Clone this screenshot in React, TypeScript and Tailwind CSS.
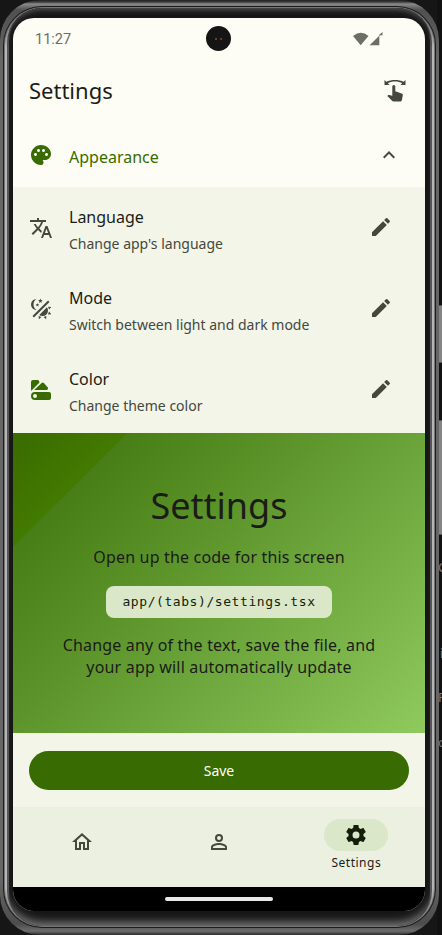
import React from "react";
import { MdPalette, MdTranslate, MdEdit } from "react-icons/md";

const P = {
  swipe:
    "M9.3 8.500A1.500 1.500 0 0 1 12.300 8.500V13.470L13.210 13.600L18.500 15.400C19.500 15.800 20 16.300 19.800 17.140L18.900 22C18.700 22.800 18.200 23.500 17.400 23.500H10.500C10 23.500 9.700 23.300 9.300 23L4.300 18L5 17.200C5.300 16.900 5.700 16.900 6 17L9.300 17.700Z M1.500 2V7H6.700L4.800 5.200C6.700 4.100 9.100 3.500 12 3.500S17.300 4.100 19.200 5.200L17.300 7H22.500V2L20.700 3.800C18.400 2.600 15.300 2 12 2S5.600 2.600 3.300 3.800L1.500 2Z",
  mode:
    "M7.5,2C5.71,3.15 4.5,5.18 4.5,7.5C4.5,9.82 5.71,11.85 7.53,13C4.46,13 2,10.54 2,7.5A5.5,5.5 0 0,1 7.5,2M19.07,3.5L20.5,4.93L4.93,20.5L3.5,19.07L19.07,3.5M12.89,5.93L11.41,5L9.97,6L10.39,4.3L9,3.24L10.75,3.12L11.33,1.47L12,3.1L13.73,3.13L12.38,4.26L12.89,5.93M9.59,9.54L8.43,8.81L7.31,9.59L7.65,8.27L6.56,7.44L7.92,7.35L8.37,6.06L8.88,7.33L10.24,7.36L9.19,8.23L9.59,9.54M19,13.5A5.5,5.5 0 0,1 13.5,19C12.28,19 11.15,18.6 10.24,17.93L17.93,10.24C18.6,11.15 19,12.28 19,13.5M14.6,20.08L17.37,18.93L17.13,22.28L14.6,20.08M18.93,17.38L20.08,14.61L22.28,17.15L18.93,17.38M20.08,12.42L18.94,9.64L22.28,9.88L20.08,12.42M9.63,18.93L12.4,20.08L9.87,22.27L9.63,18.93Z",
  home: "M12 5.69L17 10.19V18H15V12H9V18H7V10.19L12 5.69M12 3L2 12H5V20H11V14H13V20H19V12H22L12 3Z",
  account:
    "M12,4A4,4 0 0,1 16,8A4,4 0 0,1 12,12A4,4 0 0,1 8,8A4,4 0 0,1 12,4M12,6A2,2 0 0,0 10,8A2,2 0 0,0 12,10A2,2 0 0,0 14,8A2,2 0 0,0 12,6M12,13C14.67,13 20,14.33 20,17V20H4V17C4,14.33 9.33,13 12,13M12,14.9C9.03,14.9 5.9,16.36 5.9,17V18.1H18.1V17C18.1,16.36 14.97,14.9 12,14.9Z",
  cog: "M12,15.5A3.5,3.5 0 0,1 8.5,12A3.5,3.5 0 0,1 12,8.5A3.5,3.5 0 0,1 15.5,12A3.5,3.5 0 0,1 12,15.5M19.43,12.97C19.47,12.65 19.5,12.33 19.5,12C19.5,11.67 19.47,11.34 19.43,11L21.54,9.37C21.73,9.22 21.78,8.95 21.66,8.73L19.66,5.27C19.54,5.05 19.27,4.96 19.05,5.05L16.56,6.05C16.04,5.66 15.5,5.32 14.87,5.07L14.5,2.42C14.46,2.18 14.25,2 14,2H10C9.75,2 9.54,2.18 9.5,2.42L9.13,5.07C8.5,5.32 7.96,5.66 7.44,6.05L4.95,5.05C4.73,4.96 4.46,5.05 4.34,5.27L2.34,8.73C2.21,8.95 2.27,9.22 2.46,9.37L4.57,11C4.53,11.34 4.5,11.67 4.5,12C4.5,12.33 4.53,12.65 4.57,12.97L2.46,14.63C2.27,14.78 2.21,15.05 2.34,15.27L4.34,18.73C4.46,18.95 4.73,19.03 4.95,18.95L7.44,17.94C7.96,18.34 8.5,18.68 9.13,18.93L9.5,21.58C9.54,21.82 9.75,22 10,22H14C14.25,22 14.46,21.82 14.5,21.58L14.87,18.93C15.5,18.67 16.04,18.34 16.56,17.94L19.05,18.95C19.27,19.03 19.54,18.95 19.66,18.73L21.66,15.27C21.78,15.05 21.73,14.78 21.54,14.63L19.43,12.97Z",
  up: "M7.41,15.41L12,10.83L16.59,15.41L18,14L12,8L6,14L7.41,15.41Z",
};

function Icon({ d, size = 24 }: { d: string; size?: number }) {
  return (
    <svg width={size} height={size} viewBox="0 0 24 24" fill="currentColor">
      <path d={d} />
    </svg>
  );
}

function SwatchIcon() {
  return (
    <svg width="24" height="24" viewBox="0 0 24 24" fill="currentColor">
      <path d="M2 4a2 2 0 0 1 2-2h4.6a1.6 1.6 0 0 1 1.5 1.2l.4 1.300L2.300 12.800 2 12z" />
      <path d="M5.200 12 12.600 5a1.700 1.700 0 0 1 2.300 0L18.600 9.200c.9 1.200.2 2.800-1.200 2.800z" />
      <path
        fillRule="evenodd"
        d="M6 14h14a2 2 0 0 1 2 2v4a2 2 0 0 1-2 2H6a4 4 0 0 1 0-8zm0 2a2 2 0 1 0 0 4 2 2 0 0 0 0-4z"
      />
    </svg>
  );
}

function Row({ icon, title, sub }: { icon: React.ReactNode; title: string; sub: string }) {
  return (
    <div className="flex h-[81.3px] items-center pl-4 pr-8 text-[#44483d]">
      <span className="w-10">{icon}</span>
      <div className="flex-1 pt-[5px]">
        <div className="text-[16px] leading-6 text-[#1b1c18]">{title}</div>
        <div className="mt-[3px] text-[14px] leading-6">{sub}</div>
      </div>
      <span className="pb-[2px]">
        <MdEdit size={24} />
      </span>
    </div>
  );
}

export default function App() {
  return (
    <div className="relative h-[935px] w-[442px] overflow-hidden bg-[#161616] font-['Noto_Sans',sans-serif]">
      <div className="absolute inset-y-0 left-[437px] w-[5px] bg-[#111]" />
      <div className="absolute left-[437px] top-[305px] h-[58px] w-[6px] border border-[#555] bg-[#858585]" />
      <div className="absolute left-[437px] top-[420px] h-[115px] w-[6px] border border-[#555] bg-[#858585]" />
      <div className="absolute left-[438px] top-[559px] text-[13px] leading-4 text-[#777]">C</div>
      <div className="absolute left-[440px] top-[645px] text-[13px] leading-4 text-[#777]">i</div>
      <div className="absolute left-[438px] top-[689px] text-[13px] leading-4 text-[#777]">F</div>
      <div className="absolute left-[438px] top-[734px] text-[13px] leading-4 text-[#777]">o</div>

      <div className="relative h-[935px] w-[439px] rounded-[40px] bg-[linear-gradient(#222_0,#3c3c3c_2px,#8a8a8a_4px,#505050_10px,#666_60px,#666_880px,#4c4c4c_924px,#6c6c6c_931px,#2c2c2c_935px)] px-[3px] pt-[6px] pb-[7px]">
        <div className="h-full rounded-[39px] bg-[#1c1c1c] p-px">
          <div className="h-full rounded-[38px] bg-[#747474] px-px py-px">
            <div className="h-full rounded-[37px] bg-[linear-gradient(#555,#b5b5b5_40px,#b5b5b5_880px,#666)] px-[2px]">
              <div className="h-full rounded-[35px] bg-[linear-gradient(#222,#555_40px,#555_880px,#444)] px-[2px]">
                <div className="h-full rounded-[33px] bg-[#161616] px-[4px] pt-[10px] shadow-[inset_0_7px_6px_-6px_#666,inset_0_-10px_8px_-6px_#777]">
                  <Screen />
                </div>
              </div>
            </div>
          </div>
        </div>
      </div>
    </div>
  );
}

function Screen() {
  return (
    <div className="relative flex h-[893px] w-[412px] flex-col overflow-hidden rounded-[21px] bg-[#fdfdf5]">
      <div className="absolute left-[193px] top-[8px] flex h-[25px] w-[25px] items-center justify-center gap-[3px] rounded-full bg-[#151515]">
        <i className="h-[2px] w-[2px] rounded-full bg-[#6b5c32]" />
        <i className="h-[2px] w-[2px] rounded-full bg-[#83492d]" />
      </div>
      <div className="flex h-[41px] shrink-0 items-center justify-between pl-[22px] pr-[42px] pt-px text-[#6c6e68]">
        <span className="pt-[2px] font-['Roboto',sans-serif] text-[14.500px] leading-5">11:27</span>
        <svg width="30" height="14" viewBox="0 0 30 14" fill="currentColor">
          <path d="M0 4Q8 -2.500 15.500 4L7.700 13.300z" />
          <path d="M16.500 13.300 26.300 3.800V13.300z" />
          <path d="M26.300 4.300V2.800L29.500 0V3.200H27.500z" />
        </svg>
      </div>
      <header className="flex h-16 shrink-0 items-center justify-between px-4 pb-[2px]">
        <h1 className="text-[22px] leading-7 text-[#1b1c18]">Settings</h1>
        <span className="mr-[2px] text-[#44483d]">
          <Icon d={P.swipe} />
        </span>
      </header>
      <div className="flex h-[64px] shrink-0 items-center pl-4 pr-6 text-[#386b01]">
        <span className="w-10">
          <MdPalette size={24} />
        </span>
        <span className="flex-1 pt-[4px] text-[16px] leading-6">Appearance</span>
        <span className="text-[#44483d]">
          <Icon d={P.up} />
        </span>
      </div>
      <section className="h-[245.500px] shrink-0 bg-[#f3f5e9]">
        <Row icon={<MdTranslate size={24} />} title="Language" sub="Change app's language" />
        <Row icon={<Icon d={P.mode} />} title="Mode" sub="Switch between light and dark mode" />
        <Row icon={<span className="text-[#386b01]"><SwatchIcon /></span>} title="Color" sub="Change theme color" />
      </section>
      <section className="flex h-[300.500px] shrink-0 flex-col items-center bg-[linear-gradient(135deg,#386b01_0%,#437a00_16%,#477e15_16.100%,#8fca5e_100%)] pt-[49px] text-center text-[#1b1c18]">
        <h2 className="text-[36px] leading-[48px]">Settings</h2>
        <p className="mt-[15px] text-[16px] leading-6 tracking-[0.180px]">Open up the code for this screen</p>
        <code className="mt-[17px] flex h-8 w-[226px] items-center justify-center rounded-lg bg-[#dae7c9] font-['DejaVu_Sans_Mono',monospace] text-[13px] tracking-[0.570px] text-[#131f0a]">
          app/(tabs)/settings.tsx
        </code>
        <p className="mt-[16px] w-[330px] text-[16px] leading-[22px] tracking-[0.180px]">
          Change any of the text, save the file, and your app will automatically update
        </p>
      </section>
      <div className="flex h-[74px] shrink-0 items-center bg-[#f3f5e9] px-4 pt-px">
        <button className="h-[39.500px] w-full rounded-full bg-[#386b01] text-[14px] text-white">Save</button>
      </div>
      <nav className="grid h-[79.600px] shrink-0 grid-cols-3 bg-[#ecf0e1] text-[#44483d]">
        <span className="flex items-center justify-center pb-[9px]"><Icon d={P.home} /></span>
        <span className="flex items-center justify-center pb-[9px]"><Icon d={P.account} /></span>
        <span className="flex flex-col items-center pt-[12px] text-[#131f0a]">
          <span className="flex h-8 w-16 items-center justify-center rounded-full bg-[#dae7c9]">
            <Icon d={P.cog} />
          </span>
          <span className="mt-1 text-[12px] leading-4 tracking-[0.500px] text-[#1b1c18]">Settings</span>
        </span>
      </nav>
      <div className="flex flex-1 justify-center bg-black pt-[10px]">
        <div className="h-1 w-[108px] rounded-full bg-[#e8e8e8]" />
      </div>
    </div>
  );
}
